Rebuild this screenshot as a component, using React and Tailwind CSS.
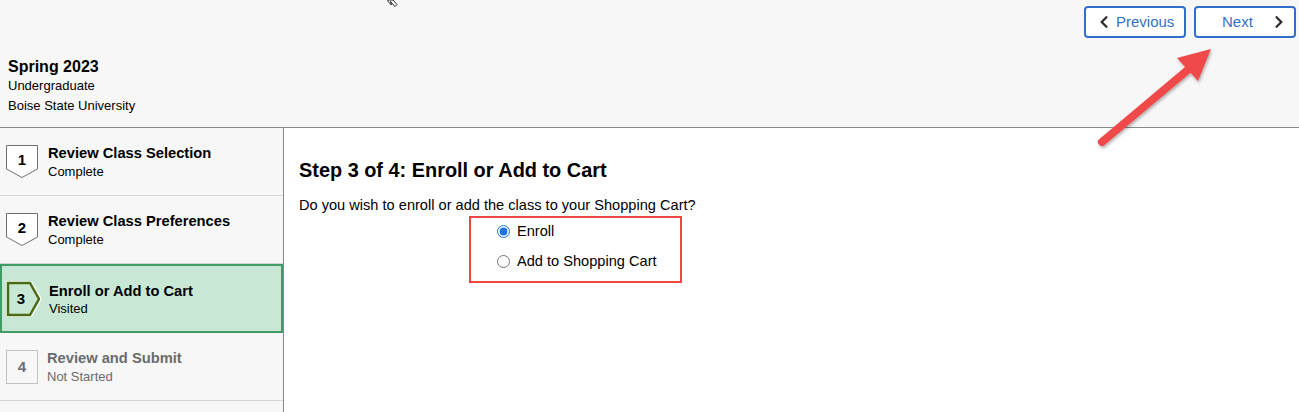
import { FaChevronLeft, FaChevronRight } from "react-icons/fa";

const steps = [
  { n: 1, title: "Review Class Selection", status: "Complete", state: "done" },
  { n: 2, title: "Review Class Preferences", status: "Complete", state: "done" },
  { n: 3, title: "Enroll or Add to Cart", status: "Visited", state: "current" },
  { n: 4, title: "Review and Submit", status: "Not Started", state: "todo" },
];

function StepBadge({ n, state }) {
  if (state === "done") {
    return (
      <div className="relative w-[33px] h-[34px] shrink-0">
        <svg width="33" height="34" viewBox="0 0 33 34" className="absolute inset-0">
          <path d="M0.5 0.5 H31.5 V24 L16 32.5 L0.5 24 Z" fill="#fff" stroke="#6f6f6f" strokeWidth="1" />
        </svg>
        <span className="absolute left-0 top-[6px] w-[32px] text-center text-[15px] font-bold text-black leading-[17px]">
          {n}
        </span>
      </div>
    );
  }
  if (state === "current") {
    return (
      <div className="relative w-[36px] h-[36px] shrink-0">
        <svg width="36" height="36" viewBox="0 0 36 36" className="absolute inset-0">
          <path d="M2 2 H24 L33 18 L24 34 H2 Z" fill="#c8e8d5" stroke="#fff" strokeWidth="5" strokeLinejoin="miter" />
          <path d="M2 2 H24 L33 18 L24 34 H2 Z" fill="#c8e8d5" stroke="#4b6b12" strokeWidth="2.5" strokeLinejoin="miter" />
        </svg>
        <span className="absolute left-0 top-[9px] w-[30px] text-center text-[15px] font-bold text-black leading-[17px]">
          {n}
        </span>
      </div>
    );
  }
  return (
    <div className="w-[32px] h-[34px] shrink-0 border border-[#c2c2c2] bg-[#f7f7f7] flex items-center justify-center text-[15px] font-bold text-[#6b6b6b]">
      {n}
    </div>
  );
}

export default function App() {
  return (
    <div className="relative w-[1299px] h-[412px] overflow-hidden bg-white text-black" style={{ fontFamily: '"Liberation Sans", Arial, sans-serif' }}>
      {/* Header */}
      <header className="h-[128px] bg-[#f7f7f7] border-b border-[#848a90] flex flex-col">
        <div className="flex justify-end gap-[8px] pt-[6px] pr-[3px]">
          <button className="w-[102px] h-[32px] rounded-[4px] border-2 border-[#2f6fcb] bg-white flex items-center pl-[11px] gap-[5px] text-[15px] text-[#3470c6]">
            <FaChevronLeft className="text-[#2b2b2b] text-[14px]" />
            <span>Previous</span>
          </button>
          <button className="w-[102px] h-[32px] rounded-[4px] border-2 border-[#2f6fcb] bg-white flex items-center justify-between pl-[26px] pr-[8px] text-[15px] text-[#3470c6]">
            <span>Next</span>
            <FaChevronRight className="text-[#2b2b2b] text-[14px]" />
          </button>
        </div>
        <div className="pl-[8px] mt-[19px]">
          <div className="text-[16px] font-bold leading-[19px]">Spring 2023</div>
          <div className="text-[13px] leading-[19px]">Undergraduate</div>
          <div className="text-[13px] leading-[22px]">Boise State University</div>
        </div>
      </header>

      <div className="flex h-[284px]">
        {/* Sidebar */}
        <aside className="w-[284px] shrink-0 bg-[#f7f7f7] border-r border-[#848a90]">
          {steps.map((s) =>
            s.state === "current" ? (
              <div key={s.n} className="h-[69px] bg-[#c8e8d5] border-2 border-[#3f9c66] flex items-start pl-[4px] pt-[15px] gap-[7px]">
                <StepBadge n={s.n} state={s.state} />
                <div className="pt-[2px]">
                  <div className="text-[14.7px] font-bold leading-[17px]">{s.title}</div>
                  <div className="text-[13px] leading-[18px]">{s.status}</div>
                </div>
              </div>
            ) : (
              <div key={s.n} className="h-[68px] border-b border-[#d3d6da] flex items-start pl-[6px] pt-[17px] gap-[9px]">
                <StepBadge n={s.n} state={s.state} />
                <div>
                  <div className={`text-[14.7px] font-bold leading-[17px] ${s.state === "todo" ? "text-[#6b6b6b]" : "text-black"}`}>{s.title}</div>
                  <div className={`text-[13px] leading-[19px] ${s.state === "todo" ? "text-[#6b6b6b]" : "text-black"}`}>{s.status}</div>
                </div>
              </div>
            )
          )}
        </aside>

        {/* Main */}
        <main className="flex-1 pl-[15px] pt-[30px]">
          <h1 className="text-[19.9px] font-bold leading-[24px]">Step 3 of 4: Enroll or Add to Cart</h1>
          <p className="mt-[15px] text-[14.6px] leading-[17px]">Do you wish to enroll or add the class to your Shopping Cart?</p>
          <div className="ml-[170px] mt-[2px] w-[213px] h-[67px] border-2 border-[#f04545] flex flex-col pl-[26px] pt-[3px] gap-[10px]">
            <label className="flex items-center gap-[7px] text-[14.6px] leading-[20px]">
              <input type="radio" name="choice" defaultChecked className="w-[13px] h-[13px] m-0 accent-[#1a73e8]" />
              Enroll
            </label>
            <label className="flex items-center gap-[7px] text-[14.6px] leading-[20px]">
              <input type="radio" name="choice" className="w-[13px] h-[13px] m-0" />
              Add to Shopping Cart
            </label>
          </div>
        </main>
      </div>

      {/* Annotation arrow */}
      <svg className="absolute left-[1090px] top-[40px]" width="140" height="115" viewBox="0 0 140 115">
        <defs>
          <filter id="sh" x="-20%" y="-20%" width="140%" height="140%">
            <feDropShadow dx="1" dy="2" stdDeviation="1.5" floodColor="#000" floodOpacity="0.3" />
          </filter>
        </defs>
        <g filter="url(#sh)">
          <line x1="12" y1="102" x2="100" y2="28" stroke="#f04848" strokeWidth="8" strokeLinecap="round" />
          <path d="M121 9 L87 18 L108 41 Z" fill="#f04848" />
        </g>
      </svg>

      {/* Mouse cursor (partially visible) */}
      <svg className="absolute left-[387px] top-0" width="12" height="8" viewBox="0 0 12 8">
        <path d="M1 0 L1 1.5 L4.5 5 L3.5 1.5 L8 6.5 L10 4.5 L6 0 Z" fill="#fff" stroke="#222" strokeWidth="1" strokeLinejoin="round" />
      </svg>
    </div>
  );
}
